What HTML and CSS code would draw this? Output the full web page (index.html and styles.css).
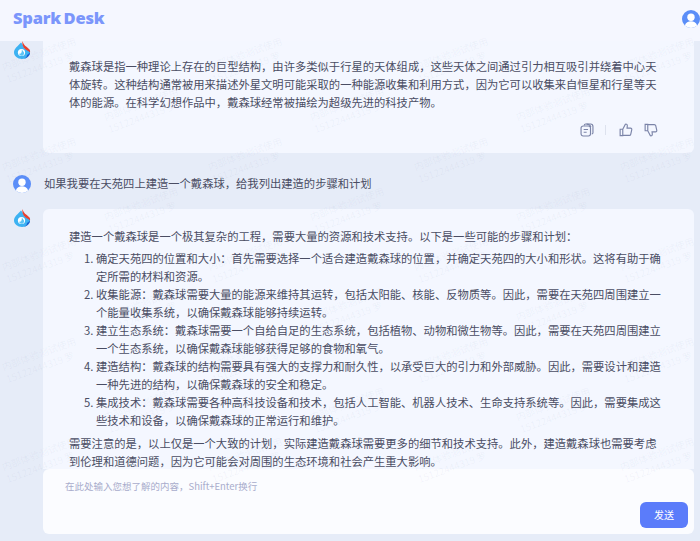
FILE: index.html
```html
<!DOCTYPE html>
<html lang="zh-CN">
<head>
<meta charset="utf-8">
<title>Spark Desk</title>
<link rel="stylesheet" href="styles.css">
</head>
<body>
<div class="app">
  <header class="topbar">
    <div class="brand">Spark Desk</div>
    <svg class="avatar avatar-top" viewBox="0 0 18 18"><use href="#user"></use></svg>
  </header>
  <main class="chat">
    <div class="feed">
      <section class="msg">
        <svg class="avatar" viewBox="0 0 18 18"><use href="#spark"></use></svg>
        <div class="bubble">
          <p class="para">戴森球是指一种理论上存在的巨型结构，由许多类似于行星的天体组成，这些天体之间通过引力相互吸引并绕着中心天体旋转。这种结构通常被用来描述外星文明可能采取的一种能源收集和利用方式，因为它可以收集来自恒星和行星等天体的能源。在科学幻想作品中，戴森球经常被描绘为超级先进的科技产物。</p>
          <div class="tools">
            <svg class="tool" viewBox="0 0 16 16"><path d="M5 2.800V2.500c0-.8.6-1.300 1.400-1.300h5.600c1.500 0 2.800 1.200 2.800 2.800v7.200c0 .8-.6 1.400-1.400 1.400"/><path d="M7.500 1.300c2.500.1 4.500 1.500 4.900 3.400"/><rect x="1.200" y="3.400" width="10.800" height="11.400" rx="2.400"/><path d="M4.200 7.400h5M4.200 10.600h3.400"/></svg>
            <span class="sep"></span>
            <svg class="tool" viewBox="0 0 16 16"><path d="M1.300 7.200h3v7.300h-3zM4.300 7.200l3-5.800c1.300-.4 2.300.4 2.200 1.700l-.3 2.800h4c1 0 1.600.8 1.400 1.700l-1.200 5.300c-.2.900-.8 1.300-1.600 1.300h-7.500"/></svg>
            <svg class="tool tool-down" viewBox="0 0 16 16"><path d="M1.300 7.200h3v7.300h-3zM4.300 7.200l3-5.800c1.300-.4 2.300.4 2.200 1.700l-.3 2.800h4c1 0 1.600.8 1.400 1.700l-1.200 5.300c-.2.900-.8 1.300-1.600 1.300h-7.500"/></svg>
          </div>
        </div>
      </section>
      <section class="question">
        <svg class="avatar" viewBox="0 0 18 18"><use href="#user"></use></svg>
        <p class="para">如果我要在天苑四上建造一个戴森球，给我列出建造的步骤和计划</p>
      </section>
      <section class="msg">
        <svg class="avatar" viewBox="0 0 18 18"><use href="#spark"></use></svg>
        <div class="bubble bubble-long">
          <p class="para">建造一个戴森球是一个极其复杂的工程，需要大量的资源和技术支持。以下是一些可能的步骤和计划：</p>
          <ol class="steps">
            <li>确定天苑四的位置和大小：首先需要选择一个适合建造戴森球的位置，并确定天苑四的大小和形状。这将有助于确定所需的材料和资源。</li>
            <li>收集能源：戴森球需要大量的能源来维持其运转，包括太阳能、核能、反物质等。因此，需要在天苑四周围建立一个能量收集系统，以确保戴森球能够持续运转。</li>
            <li>建立生态系统：戴森球需要一个自给自足的生态系统，包括植物、动物和微生物等。因此，需要在天苑四周围建立一个生态系统，以确保戴森球能够获得足够的食物和氧气。</li>
            <li>建造结构：戴森球的结构需要具有强大的支撑力和耐久性，以承受巨大的引力和外部威胁。因此，需要设计和建造一种先进的结构，以确保戴森球的安全和稳定。</li>
            <li>集成技术：戴森球需要各种高科技设备和技术，包括人工智能、机器人技术、生命支持系统等。因此，需要集成这些技术和设备，以确保戴森球的正常运行和维护。</li>
          </ol>
          <p class="para">需要注意的是，以上仅是一个大致的计划，实际建造戴森球需要更多的细节和技术支持。此外，建造戴森球也需要考虑到伦理和道德问题，因为它可能会对周围的生态环境和社会产生重大影响。</p>
        </div>
      </section>
    </div>
    <form class="composer">
      <div class="hint">在此处输入您想了解的内容，Shift+Enter换行</div>
      <button class="send" type="button">发送</button>
    </form>
  </main>
  <div class="marks" aria-hidden="true">
    <div class="mark-row"><div class="mark">内部体验测试使用<br>15122444319 罗</div><div class="mark">内部体验测试使用<br>15122444319 罗</div><div class="mark">内部体验测试使用<br>15122444319 罗</div><div class="mark">内部体验测试使用<br>15122444319 罗</div></div>
    <div class="mark-row mark-row-odd"><div class="mark">内部体验测试使用<br>15122444319 罗</div><div class="mark">内部体验测试使用<br>15122444319 罗</div><div class="mark">内部体验测试使用<br>15122444319 罗</div></div>
    <div class="mark-row"><div class="mark">内部体验测试使用<br>15122444319 罗</div><div class="mark">内部体验测试使用<br>15122444319 罗</div><div class="mark">内部体验测试使用<br>15122444319 罗</div><div class="mark">内部体验测试使用<br>15122444319 罗</div></div>
    <div class="mark-row mark-row-odd"><div class="mark">内部体验测试使用<br>15122444319 罗</div><div class="mark">内部体验测试使用<br>15122444319 罗</div><div class="mark">内部体验测试使用<br>15122444319 罗</div></div>
    <div class="mark-row"><div class="mark">内部体验测试使用<br>15122444319 罗</div><div class="mark">内部体验测试使用<br>15122444319 罗</div><div class="mark">内部体验测试使用<br>15122444319 罗</div><div class="mark">内部体验测试使用<br>15122444319 罗</div></div>
    <div class="mark-row mark-row-odd"><div class="mark">内部体验测试使用<br>15122444319 罗</div><div class="mark">内部体验测试使用<br>15122444319 罗</div><div class="mark">内部体验测试使用<br>15122444319 罗</div></div>
    <div class="mark-row"><div class="mark">内部体验测试使用<br>15122444319 罗</div><div class="mark">内部体验测试使用<br>15122444319 罗</div><div class="mark">内部体验测试使用<br>15122444319 罗</div><div class="mark">内部体验测试使用<br>15122444319 罗</div></div>
    <div class="mark-row mark-row-odd"><div class="mark">内部体验测试使用<br>15122444319 罗</div><div class="mark">内部体验测试使用<br>15122444319 罗</div><div class="mark">内部体验测试使用<br>15122444319 罗</div></div>
    <div class="mark-row"><div class="mark">内部体验测试使用<br>15122444319 罗</div><div class="mark">内部体验测试使用<br>15122444319 罗</div><div class="mark">内部体验测试使用<br>15122444319 罗</div><div class="mark">内部体验测试使用<br>15122444319 罗</div></div>
  </div>
</div>
<svg class="defs" width="0" height="0">
  <symbol id="user" viewBox="0 0 18 18">
    <circle cx="9" cy="9" r="9" fill="#5b8ef8"/>
    <circle cx="9" cy="7.200" r="3.700" fill="#fff"/>
    <path d="M2.800 15.500c1-3 3.500-4.300 6.200-4.300s5.200 1.300 6.200 4.300A9 9 0 0 1 9 18a9 9 0 0 1-6.200-2.500z" fill="#fff"/>
  </symbol>
  <symbol id="spark" viewBox="0 0 18 18">
    <path d="M8 1.500C5 5 1 7.500 1 11.500 1 15 4.500 18 9 18s8-3 8-6.500c0-1.500-.5-2.500-1.500-3.500-1 1-3 .5-4-1C10.500 5 9.500 3 8 1.500z" fill="#3db2f2"/>
    <path d="M9.500 0c.5 2.500 2 4.500 4 5.800l3 2.700c.5 1 .8 2 .5 3-1.500-2-5-2.500-6.300-5C9.700 4.800 9 2.500 9.500 0z" fill="#e8402e"/>
    <path d="M17 11.500c0 3.500-3.500 6.500-8 6.500 3 0 5-2 5-4 1-.5 2-1.500 3-2.500z" fill="#1d5fd0"/>
    <circle cx="8.500" cy="11.500" r="3.600" fill="#fff"/>
    <path d="M8.800 8.500c1 1.500 2.300 2.300 2.300 3.700 0 1.500-1.200 2.600-2.600 2.600-1.300 0-2.400-1-2.400-2.200 1.400.6 3-.2 2.700-4.100z" fill="#5cc4f5"/>
  </symbol>
</svg>
</body>
</html>
```
FILE: styles.css
```css
* { box-sizing: border-box; }
html, body { margin: 0; height: 100%; overflow: hidden; }
body {
  font-family: "Noto Sans CJK SC", "Liberation Sans", sans-serif;
  font-size: 11.3px;
  color: #4a4d63;
  background: #e6ecf8;
}
.app { position: relative; width: 700px; height: 541px; overflow: hidden; display: flex; flex-direction: column; }
.topbar {
  height: 41px;
  flex: none;
  display: flex;
  align-items: flex-start;
  justify-content: space-between;
  padding: 7px 0 0 13px;
  background: #f5f7ff;
}
.brand {
  font-family: "Open Sans", "Liberation Sans", sans-serif;
  font-weight: 800;
  font-size: 16.500px;
  line-height: 22px;
  color: #7b96fb;
  letter-spacing: -.2px;
  word-spacing: -1.500px;
}
.avatar { width: 18px; height: 18px; flex: none; display: block; }
.avatar-top { margin: 3px 0 0 0; }
.chat { flex: 1; min-height: 0; position: relative; overflow: hidden; padding: 0 6px 0 0; }
.feed { display: flex; flex-direction: column; height: 428px; overflow: hidden; }
.msg { display: flex; flex: none; padding-left: 13px; gap: 12px; }
.bubble {
  flex: 1;
  background: #f4f7ff;
  border-radius: 0 0 6px 6px;
  padding: 16px 32px 0 26px;
  height: 112px;
}
.bubble-long {
  border-radius: 6px;
  height: auto;
  padding: 18px 32px 20px 26px;
}
.para { margin: 0; line-height: 18.200px; }
.tools {
  display: flex;
  align-items: center;
  justify-content: flex-end;
  margin-top: 11px;
  padding-right: 4px;
  gap: 11px;
}
.tool { width: 14px; height: 14px; flex: none; fill: none; stroke: #7b84a8; stroke-width: 1.300; }
.tool-down { transform: rotate(180deg) scaleX(-1); }
.sep { width: 1px; height: 10px; background: #dde2ee; margin-right: 2px; }
.question { display: flex; flex: none; align-items: center; gap: 13px; padding: 5px 13px 0; height: 56px; }
.steps { margin: 4px 0 4.500px; padding: 0 0 0 27px; }
.steps li { line-height: 18px; }
.composer {
  position: absolute;
  left: 43px;
  top: 428px;
  width: 651px;
  height: 65px;
  background: #fbfcff;
  border-radius: 6px;
  padding: 10px 22px;
}
.hint { font-size: 9.500px; line-height: 14px; color: #a9accc; }
.send {
  position: absolute;
  right: 6px;
  bottom: 6px;
  width: 48px;
  height: 26px;
  border: 0;
  border-radius: 6px;
  background: #5b7cfa;
  color: #fff;
  font: 10px/26px "Noto Sans CJK SC", sans-serif;
  padding: 0;
}
.marks {
  position: absolute;
  inset: 0;
  pointer-events: none;
  display: flex;
  flex-direction: column;
  padding-top: 35px;
}
.mark-row { display: flex; align-items: center; flex: none; height: 50px; margin-left: 2px; }
.mark-row-odd { margin-left: 104px; }
.mark {
  flex: none;
  width: 80px;
  margin-right: 126px;
  font-size: 9.800px;
  line-height: 13px;
  color: rgba(110, 120, 165, .07);
  transform: rotate(-20deg);
  white-space: nowrap;
}
.defs { position: absolute; }
```
